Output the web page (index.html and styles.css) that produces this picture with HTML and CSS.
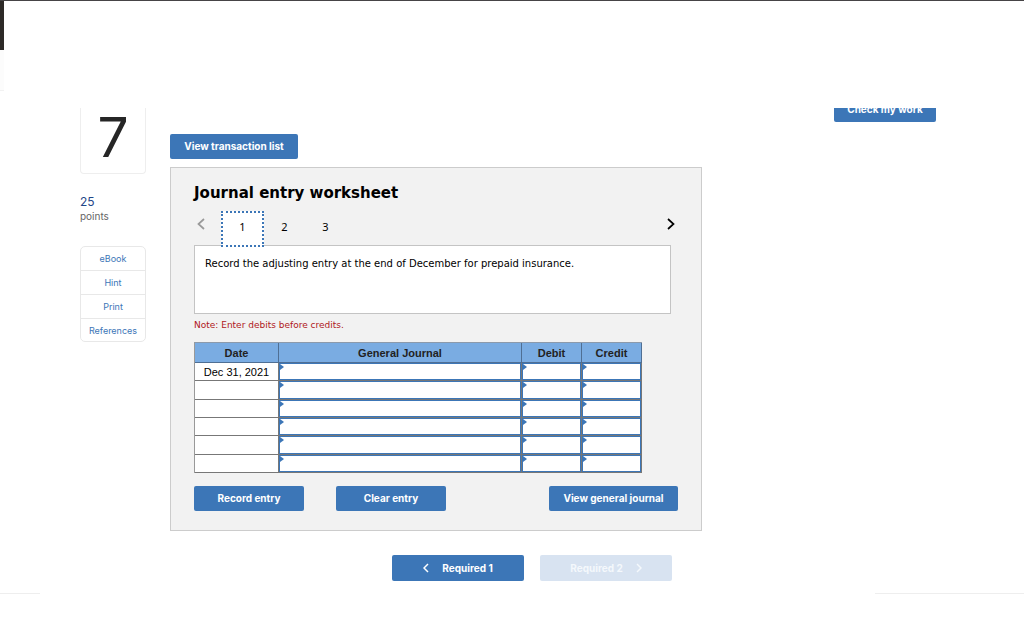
FILE: index.html
```html
<!DOCTYPE html>
<html lang="en">
<head>
    <meta charset="UTF-8">
    <meta name="viewport" content="width=device-width, initial-scale=1.0">
    <title>Journal entry worksheet</title>
    <link rel="stylesheet" href="styles.css">
</head>
<body>
    <header class="top-bar">
        <div class="rail"></div>
    </header>

    <main class="page">
        <aside class="sidebar">
            <div class="question-number">7</div>
            <div class="points"><strong>25</strong>points</div>
            <nav class="tools">
                <a href="#">eBook</a>
                <a href="#">Hint</a>
                <a href="#">Print</a>
                <a href="#">References</a>
            </nav>
        </aside>

        <section class="question">
            <button type="button" class="btn btn-list">View transaction list</button>

            <div class="worksheet">
                <h1>Journal entry worksheet</h1>
                <div class="tabs">
                    <button type="button" class="arrow prev" aria-label="Previous">
                        <svg width="8" height="12" viewBox="0 0 8 12"><path d="M7 1L1.5 6L7 11"/></svg>
                    </button>
                    <button type="button" class="tab active">1</button>
                    <button type="button" class="tab">2</button>
                    <button type="button" class="tab">3</button>
                    <button type="button" class="arrow next" aria-label="Next">
                        <svg width="8" height="12" viewBox="0 0 8 12"><path d="M1 1L6.5 6L1 11"/></svg>
                    </button>
                </div>
                <div class="prompt">Record the adjusting entry at the end of December for prepaid insurance.</div>
                <p class="note">Note: Enter debits before credits.</p>

                <table class="journal">
                    <thead>
                        <tr><th class="date">Date</th><th>General Journal</th><th class="amount">Debit</th><th class="amount">Credit</th></tr>
                    </thead>
                    <tbody>
                        <tr><td>Dec 31, 2021</td><td class="entry"><input type="text" aria-label="Account 1"></td><td class="entry"><input type="text" aria-label="Debit 1"></td><td class="entry"><input type="text" aria-label="Credit 1"></td></tr>
                        <tr><td></td><td class="entry"><input type="text" aria-label="Account 2"></td><td class="entry"><input type="text" aria-label="Debit 2"></td><td class="entry"><input type="text" aria-label="Credit 2"></td></tr>
                        <tr><td></td><td class="entry"><input type="text" aria-label="Account 3"></td><td class="entry"><input type="text" aria-label="Debit 3"></td><td class="entry"><input type="text" aria-label="Credit 3"></td></tr>
                        <tr><td></td><td class="entry"><input type="text" aria-label="Account 4"></td><td class="entry"><input type="text" aria-label="Debit 4"></td><td class="entry"><input type="text" aria-label="Credit 4"></td></tr>
                        <tr><td></td><td class="entry"><input type="text" aria-label="Account 5"></td><td class="entry"><input type="text" aria-label="Debit 5"></td><td class="entry"><input type="text" aria-label="Credit 5"></td></tr>
                        <tr><td></td><td class="entry"><input type="text" aria-label="Account 6"></td><td class="entry"><input type="text" aria-label="Debit 6"></td><td class="entry"><input type="text" aria-label="Credit 6"></td></tr>
                    </tbody>
                </table>

                <div class="actions">
                    <button type="button" class="btn btn-entry">Record entry</button>
                    <button type="button" class="btn btn-entry">Clear entry</button>
                    <button type="button" class="btn btn-journal">View general journal</button>
                </div>
            </div>

            <div class="pager">
                <button type="button" class="btn">
                    <svg width="6" height="10" viewBox="0 0 6 10"><path d="M5 1L1 5L5 9"/></svg>
                    Required 1
                </button>
                <button type="button" class="btn" disabled>
                    Required 2
                    <svg width="6" height="10" viewBox="0 0 6 10"><path d="M1 1L5 5L1 9"/></svg>
                </button>
            </div>
        </section>

        <div class="check">
            <button type="button" class="btn">Check my work</button>
        </div>
    </main>

    <footer class="bottom-line">
        <span></span>
        <span class="wide"></span>
    </footer>
</body>
</html>
```
FILE: styles.css
```css
/* General styles */
* {
    box-sizing: border-box;
}

body {
    margin: 0;
    background: #fff;
    color: #000;
    font-family: "DejaVu Sans", sans-serif;
    font-size: 11px;
}

button {
    font: inherit;
    cursor: pointer;
}

svg {
    fill: none;
    stroke: currentColor;
    stroke-width: 1.7;
}

/* Top bar */
.top-bar {
    height: 108px;
    border-top: 1px solid #464446;
}

.rail {
    width: 4px;
    height: 90px;
    border-top: 49px solid #2d2a27;
    border-bottom: 1px solid #f2f2f2;
    background: #fcfcfc;
}

/* Page columns */
.page {
    display: grid;
    grid-template-columns: 66px minmax(0, 532px) 1fr;
    column-gap: 24px;
    padding: 0 88px 0 80px;
    overflow: hidden;
}

/* Sidebar */
.question-number {
    height: 66px;
    border: 1px solid #eee;
    border-top: 0;
    border-radius: 0 0 4px 4px;
    color: #262626;
    font: 400 55px/58px Inter, sans-serif;
    text-align: center;
}

.points {
    margin-top: 21px;
    color: #666;
    font: 10px/14px Inter, sans-serif;
}

.points strong {
    display: block;
    color: #1f4788;
    font-size: 12px;
    font-weight: 400;
}

.tools {
    display: grid;
    grid-template-rows: repeat(4, 1fr);
    height: 96px;
    margin-top: 23px;
    border: 1px solid #e8e8e8;
    border-radius: 5px;
}

.tools a {
    color: #3c76b7;
    font: 9px/23px Inter, sans-serif;
    text-align: center;
    text-decoration: none;
}

.tools a + a {
    border-top: 1px solid #e8e8e8;
}

/* Buttons */
.btn {
    height: 25px;
    padding: 0;
    border: 0;
    border-radius: 2px;
    background: #3c76b7;
    color: #fff;
    font: 700 10px/25px Inter, sans-serif;
}

.btn:disabled {
    background: #d8e3f1;
    color: #f4f8fc;
}

.btn-list {
    display: block;
    width: 128px;
    margin: 26px 0 8px;
}

.btn-entry {
    width: 110px;
}

.btn-journal {
    width: 129px;
    margin-left: auto;
}

/* Worksheet */
.worksheet {
    padding: 16px 23px 19px;
    border: 1px solid #ccc;
    background: #f2f2f2;
}

.worksheet h1 {
    margin: 0;
    font-size: 15px;
    line-height: 18px;
}

.tabs {
    display: flex;
    height: 34px;
    margin: 9px 0 0;
}

.tabs button {
    border: 0;
    background: none;
    padding: 0;
    font-family: "Noto Sans", sans-serif;
}

.tabs .arrow {
    width: 14px;
    height: 28px;
}

.tabs .prev {
    margin-right: 13px;
    color: #999;
}

.tabs .next {
    margin-left: auto;
}

.tabs .tab {
    width: 41px;
    height: 30px;
}

.tabs .active {
    position: relative;
    width: 43px;
    height: 36px;
    padding-bottom: 6px;
    border: 2px dotted #3c76b7;
    background: #fff;
}

.prompt {
    height: 69px;
    margin-right: 7px;
    padding: 11px 10px;
    border: 1px solid #c4c4c4;
    background: #fff;
    font-size: 10px;
    line-height: 14px;
}

.note {
    margin: 4px 0 10px;
    color: #b01721;
    font-size: 9px;
    line-height: 14px;
}

/* Journal table */
.journal {
    width: 448px;
    border-top: 1px solid #8c9aab;
    border-left: 1px solid #999;
    border-spacing: 0;
    table-layout: fixed;
    font: 11px/14px "Liberation Sans", sans-serif;
    text-align: center;
}

.journal th {
    height: 20px;
    padding: 0;
    border: solid #4f6f94;
    border-width: 0 1px 1px 0;
    background: #7aace2;
    color: #222;
}

.journal .date {
    width: 84px;
}

.journal .amount {
    width: 60px;
}

.journal td {
    padding: 0;
    border: solid #777;
    border-width: 0 1px 1px 0;
    background: #fff;
}

.journal .entry {
    position: relative;
}

.journal .entry::before {
    content: "";
    position: absolute;
    top: 1px;
    left: 1px;
    border: 3px solid transparent;
    border-left: 4px solid #3c76b7;
    border-right: 0;
}

.journal input {
    display: block;
    width: 100%;
    height: 17px;
    padding: 0 6px;
    border: 1px solid #3c76b7;
    background: none;
    font: inherit;
}

.journal tr:nth-child(3n + 2) input {
    height: 18px;
}

.actions {
    display: flex;
    gap: 32px;
    margin-top: 13px;
}

/* Pager */
.pager {
    display: flex;
    justify-content: flex-end;
    gap: 16px;
    margin: 24px 30px 0 0;
}

.pager .btn {
    display: flex;
    align-items: center;
    justify-content: center;
    gap: 13px;
    width: 132px;
    height: 26px;
}

.pager svg {
    stroke-width: 1.5;
}

.check {
    display: flex;
    justify-content: flex-end;
    align-items: flex-start;
}

.check .btn {
    width: 102px;
    margin-top: -11px;
}

/* Bottom line */
.bottom-line {
    display: flex;
    justify-content: space-between;
    margin-top: 12px;
}

.bottom-line span {
    width: 40px;
    border-top: 1px solid #eee;
}

.bottom-line .wide {
    width: 149px;
}
```
